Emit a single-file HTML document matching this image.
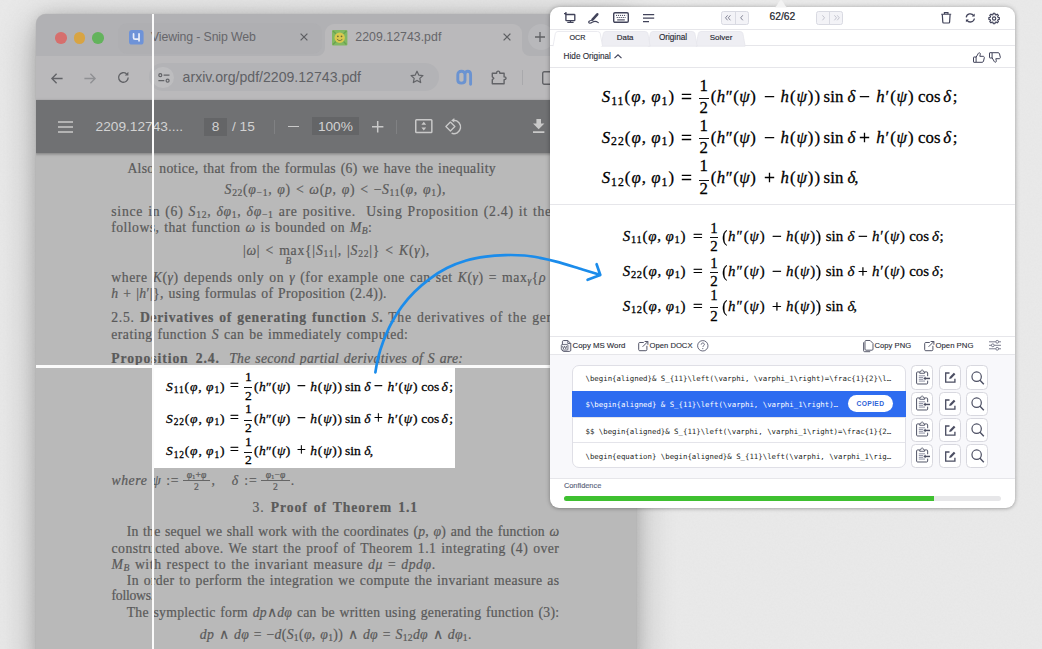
<!DOCTYPE html>
<html lang="en">
<head>
<meta charset="utf-8">
<title>Snip</title>
<style>
*{box-sizing:border-box;margin:0;padding:0}
html,body{width:1042px;height:649px;overflow:hidden}
body{position:relative;background:#e9e9e9;font-family:"Liberation Sans",sans-serif;-webkit-font-smoothing:antialiased}
.abs{position:absolute}
svg{display:block;overflow:visible}
/* ---------- browser window ---------- */
#win{position:absolute;left:35.6px;top:14.3px;width:600.6px;height:660px;border-radius:10px 10px 0 0;background:#b9b9b9;box-shadow:0 0 0 .5px rgba(0,0,0,.06),0 10px 38px rgba(0,0,0,.30),0 0 14px rgba(0,0,0,.10);overflow:hidden}
#tabbar{position:absolute;left:-.6px;top:-.3px;width:602px;height:42px;background:#b1b1b4}
#addr{position:absolute;left:-.6px;top:41.7px;width:602px;height:44px;background:#bab9bb}
#pdfbar{position:absolute;left:-.6px;top:85.7px;width:602px;height:53.3px;background:#707173;box-shadow:0 1px 3px rgba(0,0,0,.35)}
.tl{position:absolute;top:18px;width:11.5px;height:11.5px;border-radius:50%}
.ttext{position:absolute;font-size:12.3px;letter-spacing:-.12px;color:#66666a;white-space:nowrap;line-height:14px}
.ptext{position:absolute;font-size:13.7px;color:#d2d2d2;white-space:nowrap;line-height:16px}
/* ---------- pdf page ---------- */
#page{position:absolute;left:-.6px;top:138.7px;width:602px;height:520px;font-family:"Liberation Serif",serif;color:#5a5a5a;-webkit-text-stroke:.22px #5a5a5a;font-size:13.7px}
.ln{position:absolute;white-space:nowrap;line-height:16px;height:16px;text-align:justify;text-align-last:justify}
.ln.c{text-align:center;text-align-last:center}
.ln i,.eq i{font-style:italic}
sub,sup{font-size:.7em;line-height:0;position:relative;vertical-align:baseline;font-style:normal}
sub{top:.22em}
sup{top:-.42em}
.cal{font-style:italic;font-family:"Liberation Serif",serif}
.sf{position:absolute;height:22px;text-align:center;font-size:9.6px;line-height:9px;white-space:nowrap}
.sf span{display:block}
.sf span:first-child{border-bottom:1px solid #666;height:11.5px;line-height:9.5px}
.sf span:last-child{line-height:11px}
/* ---------- equations ---------- */
.eq{position:absolute;white-space:nowrap;font-family:"Liberation Serif",serif;color:#000;line-height:1;-webkit-text-stroke:.28px #000}
.eq.op{transform:scale(1.16);transform-origin:0 58.75%}
.eq .fr{display:inline-block;vertical-align:middle;text-align:center;position:relative;top:-.12em;margin:0 .04em}
.eq .fr b{display:block;font-weight:normal;line-height:1;padding:0 .06em}
.eq .fr b:first-child{border-bottom:.045em solid currentColor;padding-bottom:.06em}
.eq .fr b:last-child{padding-top:.04em}
.eq .op{margin:0 .26em}
.eq .rel{margin:0 .3em}
.eq .fn{margin:0 .17em 0 .12em}
.bar{position:absolute;height:1px;background:#111}
.eq .bp{display:inline-block;transform:scaleY(1.18);transform-origin:50% 58%}
/* ---------- snip overlay ---------- */
#sel{position:absolute;left:154px;top:367.5px;width:301.4px;height:100.8px;background:#fff;overflow:hidden}
#vline{position:absolute;left:152.2px;top:14.3px;width:2px;height:640px;background:#fbfbfb}
#hline{position:absolute;left:35.6px;top:365px;width:520px;height:3px;background:#fbfbfb}
/* ---------- panel ---------- */
#panel{position:absolute;left:550px;top:7px;width:464.6px;height:500.9px;border-radius:9px;background:#fff;box-shadow:0 0 5px rgba(0,0,0,.24),0 1px 3px rgba(0,0,0,.14);color:#25282f}
#panel .hl{position:absolute;left:0;width:100%;height:1px;background:#e6e6ea}
.ui{position:absolute;white-space:nowrap;color:#2b2d36;font-size:8.6px;line-height:10px;-webkit-text-stroke:.12px #2b2d36}
.tab{position:absolute;top:24.3px;height:14.5px;width:50px;font-size:8.4px;line-height:14px;text-align:center;color:#282a33;-webkit-text-stroke:.15px #282a33}
.row{position:absolute;left:0;width:100%;height:25.6px;font-family:"DejaVu Sans Mono","Liberation Mono",monospace;font-size:7.37px;line-height:27.4px;padding-left:12.9px;color:#1d1f24;white-space:nowrap;letter-spacing:0}
.btn{position:absolute;width:22.2px;height:24.2px;border:1px solid #d8d8df;border-radius:4.5px;background:#fff}
</style>
</head>
<body>
<svg class="abs" style="left:0;top:0" width="1042" height="649"><filter id="noise" x="0" y="0" width="100%" height="100%"><feTurbulence type="fractalNoise" baseFrequency=".55" numOctaves="2" seed="7" result="n"/><feColorMatrix type="matrix" values="0 0 0 0 0.5  0 0 0 0 0.5  0 0 0 0 0.5  .9 0 0 0 -.28"/></filter><rect width="1042" height="649" fill="#e9e9e9"/><rect width="1042" height="649" filter="url(#noise)" opacity=".10"/></svg>
<!-- WINDOW -->
<div id="win">
  <div id="tabbar">
    <div class="tl" style="left:20px;background:#d66f6d"></div>
    <div class="tl" style="left:38.5px;background:#d8a443"></div>
    <div class="tl" style="left:57.3px;background:#63b35c"></div>
    <!-- inactive tab hover shape -->
    <div class="abs" style="left:83px;top:9px;width:204px;height:31px;border-radius:9px;background:#afafb2"></div>
    <!-- tab 1 favicon -->
    <svg class="abs" style="left:94.3px;top:15.8px" width="14.6" height="14.6" viewBox="0 0 16 16"><rect width="16" height="16" rx="3.2" fill="#6e93d8"/><path d="M5 4.3v4.1c0 1 .6 1.6 1.6 1.6H11M11 4.3v7.6" fill="none" stroke="#e9eefa" stroke-width="1.9" stroke-linecap="round" stroke-linejoin="round"/></svg>
    <div class="ttext" style="left:116px;top:15.6px">Viewing - Snip Web</div>
    <svg class="abs" style="left:265.3px;top:19.2px" width="8" height="8" viewBox="0 0 8 8"><path d="M.6.6l6.8 6.8M7.4.6L.6 7.4" stroke="#5f6064" stroke-width="1.25" fill="none"/></svg>
    <!-- active tab -->
    <div class="abs" style="left:289.5px;top:10px;width:197.5px;height:32px;border-radius:9px 9px 0 0;background:#bab9bb"></div>
    <svg class="abs" style="left:281.5px;top:34px" width="8" height="8" viewBox="0 0 8 8"><path d="M8 0v8H0A8 8 0 0 0 8 0z" fill="#bab9bb"/></svg>
    <svg class="abs" style="left:487px;top:34px" width="8" height="8" viewBox="0 0 8 8"><path d="M0 0v8h8A8 8 0 0 1 0 0z" fill="#bab9bb"/></svg>
    <!-- tab 2 favicon -->
    <svg class="abs" style="left:297px;top:15.8px" width="15.4" height="15.4" viewBox="0 0 16 16"><rect width="16" height="16" rx="1" fill="#82b862"/><path d="M1 1l3 3M15 1l-3 3M1 15l3-3M15 15l-3-3" stroke="#6aa34d" stroke-width="1.4"/><circle cx="8" cy="8" r="5.4" fill="#d9c84e"/><circle cx="6.1" cy="6.6" r=".9" fill="#6b6a3a"/><circle cx="9.9" cy="6.6" r=".9" fill="#6b6a3a"/><path d="M5.2 9.3c1.4 2.2 4.2 2.2 5.6 0" fill="none" stroke="#6b6a3a" stroke-width="1"/></svg>
    <div class="ttext" style="left:320.3px;top:15.6px;letter-spacing:.04px">2209.12743.pdf</div>
    <svg class="abs" style="left:468px;top:19.2px" width="8" height="8" viewBox="0 0 8 8"><path d="M.6.6l6.8 6.8M7.4.6L.6 7.4" stroke="#5f6064" stroke-width="1.25" fill="none"/></svg>
    <!-- new tab -->
    <div class="abs" style="left:492.5px;top:10px;width:26px;height:26px;border-radius:13px;background:#b8b8bb"></div>
    <svg class="abs" style="left:500.3px;top:18px" width="10" height="10" viewBox="0 0 10 10"><path d="M5 0v10M0 5h10" stroke="#5f6064" stroke-width="1.3" fill="none"/></svg>
  </div>
  <div id="addr">
    <!-- back -->
    <svg class="abs" style="left:15.5px;top:16.6px" width="12" height="11" viewBox="0 0 12 11"><path d="M5.6.7L.9 5.5l4.7 4.8M1.2 5.5h10.4" fill="none" stroke="#626367" stroke-width="1.35"/></svg>
    <!-- forward -->
    <svg class="abs" style="left:48.6px;top:16.6px" width="12" height="11" viewBox="0 0 12 11"><path d="M6.4.7l4.7 4.8-4.7 4.8M10.8 5.5H.4" fill="none" stroke="#8f9093" stroke-width="1.35"/></svg>
    <!-- reload -->
    <svg class="abs" style="left:82.3px;top:15.4px" width="13" height="13" viewBox="0 0 13 13"><path d="M11.2 6.6A4.8 4.8 0 1 1 9.6 2.9" fill="none" stroke="#626367" stroke-width="1.35"/><path d="M11.4.8v3.6H7.8z" fill="#626367"/></svg>
    <!-- pill -->
    <div class="abs" style="left:113.6px;top:7px;width:290.6px;height:28.4px;border-radius:14.2px;background:#b3b3b6"></div>
    <div class="abs" style="left:117.4px;top:10.6px;width:22px;height:21.4px;border-radius:11px;background:#bdbdbf"></div>
    <svg class="abs" style="left:122.6px;top:17.2px" width="12" height="10" viewBox="0 0 12 10"><circle cx="2.3" cy="2.2" r="1.5" fill="none" stroke="#626367" stroke-width="1.2"/><path d="M5.6 2.2h5.9M.4 7.7h5.9" stroke="#626367" stroke-width="1.2"/><circle cx="9.6" cy="7.7" r="1.5" fill="none" stroke="#626367" stroke-width="1.2"/></svg>
    <div class="abs" style="left:147.6px;top:13.4px;font-size:14.1px;line-height:16px;color:#606165;white-space:nowrap">arxiv.org/pdf/2209.12743.pdf</div>
    <!-- star -->
    <svg class="abs" style="left:375px;top:14.4px" width="14" height="14" viewBox="0 0 14 14"><path d="M7 1.2l1.75 3.9 4.2.45-3.15 2.85.9 4.15L7 10.4l-3.7 2.15.9-4.15L1.05 5.55l4.2-.45z" fill="none" stroke="#626367" stroke-width="1.2" stroke-linejoin="round"/></svg>
    <!-- mathpix ext -->
    <svg class="abs" style="left:420.600px;top:13.900px" width="17" height="16" viewBox="0 0 17 16"><path d="M9 4.400V10.400M9 4.600C9 2.300 7.800 1.300 5.400 1.300S1.800 2.500 1.800 4.700V9.900C1.800 12 3 13.100 5.400 13.100S9 12 9 10.200M9 4.600C9 2.300 10 1.300 11.800 1.300S14.600 2.500 14.600 4.700V14.300" fill="none" stroke="#6b93d1" stroke-width="2.900" stroke-linecap="round" stroke-linejoin="round"/></svg>
    <!-- puzzle -->
    <svg class="abs" style="left:455.600px;top:13px" width="16" height="16" viewBox="0 0 16 16"><path d="M1.300 4.200h4.300c0-1.400.6-2.100 1.600-2.100s1.600.7 1.600 2.100h4.300v3.700c1.300 0 2 .5 2 1.400s-.7 1.400-2 1.400v4H1.300v-3.900l1.500-1.500-1.500-1.500z" fill="none" stroke="#626367" stroke-width="1.400" stroke-linejoin="round"/></svg>
    <div class="abs" style="left:487px;top:14px;width:1px;height:15px;background:#a9a9ac"></div>
    <!-- side panel icon -->
    <svg class="abs" style="left:506.6px;top:14.600px" width="16" height="14" viewBox="0 0 16 14"><rect x=".7" y=".7" width="14.6" height="12.6" rx="1.5" fill="none" stroke="#626367" stroke-width="1.4"/></svg>
  </div>
  <div id="pdfbar">
    <svg class="abs" style="left:23px;top:21px" width="15" height="12" viewBox="0 0 15 12"><path d="M0 1h15M0 6h15M0 11h15" stroke="#c9c9c9" stroke-width="1.5"/></svg>
    <div class="ptext" style="left:60.6px;top:19.2px">2209.12743....</div>
    <div class="abs" style="left:168.8px;top:18px;width:23.6px;height:17.6px;background:#646567"></div>
    <div class="ptext" style="left:168.8px;top:19.2px;width:23.6px;text-align:center">8</div>
    <div class="ptext" style="left:197px;top:19.2px">/ 15</div>
    <div class="abs" style="left:239px;top:20px;width:1px;height:14px;background:#808183"></div>
    <div class="abs" style="left:253px;top:25.9px;width:11.4px;height:1.5px;background:#c9c9c9"></div>
    <div class="abs" style="left:276.7px;top:17px;width:47.4px;height:18.400px;background:#646567"></div>
    <div class="ptext" style="left:276.7px;top:19.2px;width:47.4px;text-align:center">100%</div>
    <svg class="abs" style="left:337px;top:20.9px" width="11.4" height="11.4" viewBox="0 0 11.4 11.4"><path d="M5.700 0v11.4M0 5.700h11.4" stroke="#c9c9c9" stroke-width="1.5"/></svg>
    <div class="abs" style="left:361.4px;top:20px;width:1px;height:14px;background:#808183"></div>
    <!-- fit to page -->
    <svg class="abs" style="left:379.600px;top:19.200px" width="17.6" height="14.2" viewBox="0 0 17.6 14.2"><rect x=".75" y=".75" width="16.100" height="12.700" rx=".8" fill="none" stroke="#c9c9c9" stroke-width="1.500"/><path d="M8.800 2.700l2.400 3h-4.800zM8.800 11.500l2.400-3h-4.800z" fill="#c9c9c9"/></svg>
    <!-- rotate -->
    <svg class="abs" style="left:410px;top:19.300px" width="17.4" height="15.4" viewBox="0 0 17.4 15.4"><path d="M5.400 3.100l4.500 4.500-4.500 4.500L.900 7.600z" fill="none" stroke="#c9c9c9" stroke-width="1.350" stroke-linejoin="round"/><path d="M8.900 1.300A6.700 6.700 0 1 1 6.600 14.300" fill="none" stroke="#c9c9c9" stroke-width="1.450"/><path d="M9.300-.9L6.200 1.400l3.100 2.200z" fill="#c9c9c9"/></svg>
    <!-- download -->
    <svg class="abs" style="left:498.300px;top:19px" width="11.400" height="14" viewBox="0 0 11.400 14"><path d="M3.400 0h4.600v4.600h3.400L5.700 10.200 0 4.600h3.400zM0 12.200h11.400v1.700H0z" fill="#c9c9c9"/></svg>
  </div>
  <div id="page">
    <!--PAGE-->
    <div class="ln" style="left:92.4px;top:7.7px;width:368.6px;letter-spacing:0.32px">Also notice, that from the formulas (6) we have the inequality</div>
    <div class="ln" style="left:189.6px;top:29.3px;width:221.4px;letter-spacing:0.68px"><i>S</i><sub>22</sub>(<i>φ</i><sub>−1</sub>, <i>φ</i>) &lt; <i>ω</i>(<i>p</i>, <i>φ</i>) &lt; −<i>S</i><sub>11</sub>(<i>φ</i>, <i>φ</i><sub>1</sub>),</div>
    <div class="ln" style="left:76.3px;top:51.1px;width:448.1px;letter-spacing:0.73px">since in (6) <i>S</i><sub>12</sub>, <i>δφ</i><sub>1</sub>, <i>δφ</i><sub>−1</sub> are positive. &nbsp;Using Proposition (2.4) it then</div>
    <div class="ln" style="left:76.3px;top:67.0px;width:261.1px;letter-spacing:0.45px">follows, that function <i>ω</i> is bounded on <i>M</i><sub><i>B</i></sub>:</div>
    <div class="ln" style="left:207.9px;top:90.1px;width:187.0px;letter-spacing:0.76px">|<i>ω</i>| &lt; max{|<i>S</i><sub>11</sub>|, |<i>S</i><sub>22</sub>|} &lt; <i>K</i>(<i>γ</i>),</div>
    <div class="ln" style="left:250.5px;top:100.2px;width:7.0px;font-size:9.4px"><i>B</i></div>
    <div class="ln" style="left:76.3px;top:116.9px;width:448.1px;letter-spacing:0.58px">where <i>K</i>(<i>γ</i>) depends only on <i>γ</i> (for example one can set <i>K</i>(<i>γ</i>) = max<sub><i>γ</i></sub>{<i>ρ</i> +</div>
    <div class="ln" style="left:76.3px;top:133.1px;width:275.6px;letter-spacing:0.37px"><i>h</i> + |<i>h</i>′|}, using formulas of Proposition (2.4)).</div>
    <div class="ln" style="left:76.3px;top:157.3px;width:448.1px;letter-spacing:0.73px">2.5. <b>Derivatives of generating function</b> <i>S</i><b>.</b> The derivatives of the gen-</div>
    <div class="ln" style="left:76.3px;top:173.9px;width:297.1px;letter-spacing:0.47px">erating function <i>S</i> can be immediately computed:</div>
    <div class="ln" style="left:76.3px;top:197.6px;width:108.5px;letter-spacing:0.90px"><b>Proposition 2.4.</b></div>
    <div class="ln" style="left:194.2px;top:197.6px;width:234.0px;letter-spacing:0.30px"><i>The second partial derivatives of S are:</i></div>
    <div class="ln" style="left:76.5px;top:319.6px;width:67.5px;letter-spacing:0.57px"><i>where ψ</i> :=</div>
    <div class="ln" style="left:196.8px;top:319.6px;width:25.7px;letter-spacing:0.84px"><i>δ</i> :=</div>
    <div class="ln" style="left:217.5px;top:347.5px;width:165.5px;letter-spacing:0.90px">3. <b>Proof of Theorem 1.1</b></div>
    <div class="ln" style="left:91.7px;top:371.5px;width:432.7px;letter-spacing:0.20px">In the sequel we shall work with the coordinates (<i>p</i>, <i>φ</i>) and the function <i>ω</i></div>
    <div class="ln" style="left:76.5px;top:387.8px;width:447.9px;letter-spacing:0.48px">constructed above. We start the proof of Theorem 1.1 integrating (4) over</div>
    <div class="ln" style="left:76.5px;top:403.9px;width:324.2px;letter-spacing:0.58px"><i>M</i><sub><i>B</i></sub> with respect to the invariant measure <i>dμ</i> = <i>dpdφ</i>.</div>
    <div class="ln" style="left:91.7px;top:419.9px;width:432.7px;letter-spacing:0.39px">In order to perform the integration we compute the invariant measure as</div>
    <div class="ln" style="left:76.5px;top:435.5px;width:42.4px;letter-spacing:-0.26px">follows.</div>
    <div class="ln" style="left:91.7px;top:452.3px;width:432.7px;letter-spacing:0.28px">The symplectic form <i>dp</i>∧<i>dφ</i> can be written using generating function (3):</div>
    <div class="ln" style="left:164.8px;top:473.6px;width:272.0px;letter-spacing:0.33px"><i>dp</i> ∧ <i>dφ</i> = −<i>d</i>(<i>S</i><sub>1</sub>(<i>φ</i>, <i>φ</i><sub>1</sub>)) ∧ <i>dφ</i> = <i>S</i><sub>12</sub><i>dφ</i> ∧ <i>dφ</i><sub>1</sub>.</div>
    <div class="sf" style="left:147.7px;top:316.6px;width:27.6px"><span><i>φ</i><sub>1</sub>+<i>φ</i></span><span>2</span></div><div class="ln" style="left:176.6px;top:319.6px;width:4px;text-align-last:left">,</div>
    <div class="sf" style="left:226.3px;top:316.6px;width:28.4px"><span><i>φ</i><sub>1</sub>−<i>φ</i></span><span>2</span></div><div class="ln" style="left:255.8px;top:319.6px;width:4px;text-align-last:left">.</div>
    <!--/PAGE-->
  </div>
</div>
<!-- OVERLAY -->
<div id="sel">
  <!--SEL-->
    <div class="eq" style="left:12.10px;top:12.39px;font-size:13.50px;letter-spacing:0.86px"><i>S</i><sub>11</sub>(<i>φ</i>,&#8201;<i>φ</i><sub>1</sub>)</div>
    <div class="eq op" style="left:76.03px;top:12.39px;font-size:13.50px">=</div>
    <div class="eq" style="left:90.95px;top:2.41px;font-size:13.50px">1</div>
    <div class="eq" style="left:90.95px;top:21.38px;font-size:13.50px">2</div>
    <div class="bar" style="left:90.39px;top:19.93px;width:7.86px"></div>
    <div class="eq" style="left:99.97px;top:12.39px;font-size:13.50px;letter-spacing:0.42px">(<i>h</i>″(<i>ψ</i>)</div>
    <div class="eq op" style="left:143.18px;top:12.39px;font-size:13.50px">−</div>
    <div class="eq" style="left:156.32px;top:12.39px;font-size:13.50px;letter-spacing:0.78px"><i>h</i>(<i>ψ</i>))</div>
    <div class="eq" style="left:190.98px;top:12.39px;font-size:13.50px;letter-spacing:0.06px">sin</div>
    <div class="eq" style="left:210.33px;top:12.39px;font-size:13.50px"><i>δ</i></div>
    <div class="eq op" style="left:219.76px;top:12.39px;font-size:13.50px">−</div>
    <div class="eq" style="left:233.46px;top:12.39px;font-size:13.50px;letter-spacing:0.72px"><i>h</i>′(<i>ψ</i>)</div>
    <div class="eq" style="left:267.16px;top:12.39px;font-size:13.50px;letter-spacing:0.03px">cos</div>
    <div class="eq" style="left:287.39px;top:12.39px;font-size:13.50px;letter-spacing:1.48px"><i>δ</i>;</div>
    <div class="eq" style="left:12.10px;top:44.79px;font-size:13.50px;letter-spacing:0.82px"><i>S</i><sub>22</sub>(<i>φ</i>,&#8201;<i>φ</i><sub>1</sub>)</div>
    <div class="eq op" style="left:76.03px;top:44.79px;font-size:13.50px">=</div>
    <div class="eq" style="left:90.95px;top:34.81px;font-size:13.50px">1</div>
    <div class="eq" style="left:90.95px;top:53.78px;font-size:13.50px">2</div>
    <div class="bar" style="left:90.39px;top:52.33px;width:7.86px"></div>
    <div class="eq" style="left:99.97px;top:44.79px;font-size:13.50px;letter-spacing:0.42px">(<i>h</i>″(<i>ψ</i>)</div>
    <div class="eq op" style="left:143.18px;top:44.79px;font-size:13.50px">−</div>
    <div class="eq" style="left:156.32px;top:44.79px;font-size:13.50px;letter-spacing:0.78px"><i>h</i>(<i>ψ</i>))</div>
    <div class="eq" style="left:190.98px;top:44.79px;font-size:13.50px;letter-spacing:0.06px">sin</div>
    <div class="eq" style="left:210.33px;top:44.79px;font-size:13.50px"><i>δ</i></div>
    <div class="eq op" style="left:219.76px;top:44.79px;font-size:13.50px">+</div>
    <div class="eq" style="left:233.46px;top:44.79px;font-size:13.50px;letter-spacing:0.72px"><i>h</i>′(<i>ψ</i>)</div>
    <div class="eq" style="left:267.16px;top:44.79px;font-size:13.50px;letter-spacing:0.03px">cos</div>
    <div class="eq" style="left:287.39px;top:44.79px;font-size:13.50px;letter-spacing:1.48px"><i>δ</i>;</div>
    <div class="eq" style="left:12.10px;top:76.99px;font-size:13.50px;letter-spacing:0.82px"><i>S</i><sub>12</sub>(<i>φ</i>,&#8201;<i>φ</i><sub>1</sub>)</div>
    <div class="eq op" style="left:76.03px;top:76.99px;font-size:13.50px">=</div>
    <div class="eq" style="left:90.95px;top:67.56px;font-size:13.50px">1</div>
    <div class="eq" style="left:90.95px;top:85.98px;font-size:13.50px">2</div>
    <div class="bar" style="left:90.39px;top:84.53px;width:7.86px"></div>
    <div class="eq" style="left:99.97px;top:76.99px;font-size:13.50px;letter-spacing:0.42px">(<i>h</i>″(<i>ψ</i>)</div>
    <div class="eq op" style="left:143.18px;top:76.99px;font-size:13.50px">+</div>
    <div class="eq" style="left:156.32px;top:76.99px;font-size:13.50px;letter-spacing:0.78px"><i>h</i>(<i>ψ</i>))</div>
    <div class="eq" style="left:190.98px;top:76.99px;font-size:13.50px;letter-spacing:0.06px">sin</div>
    <div class="eq" style="left:210.33px;top:76.99px;font-size:13.50px;letter-spacing:-0.88px"><i>δ</i>,</div>
    <!--/SEL-->
</div>
<div id="vline"></div>
<div id="hline"></div>
<!-- PANEL -->
<div id="panel">
  <!--PANEL-->
    <svg class="abs" style="left:224.2px;top:-7px" width="14" height="7.5" viewBox="0 0 14 7.5"><path d="M0 7.500C3 7.500 5 0 7 0s4 7.500 7 7.500z" fill="#f3f3f3"/></svg>
  <svg class="abs" style="left:14px;top:5.300px" width="11.5" height="11" viewBox="0 0 11.5 11"><path d="M1.900 0v3M0 1.650h2.600" stroke="#41435a" stroke-width="1.250" fill="none"/><rect x="1.900" y="2.500" width="8.900" height="6.100" rx=".5" fill="none" stroke="#41435a" stroke-width="1.35"/><path d="M6.450 8.500v1.800M3.300 10.300h6.300" stroke="#41435a" stroke-width="1.25" fill="none"/></svg>
  <svg class="abs" style="left:38.200px;top:5.600px" width="11.5" height="11" viewBox="0 0 11.5 11"><path d="M9.300 1.300L4.500 6.600" stroke="#41435a" stroke-width="2.500" stroke-linecap="round" fill="none"/><path d="M3.800 7.300C1.500 7.600.2 8.800.8 9.700c.7 1 2.600.2 3.900-.6 1.400-.9 3.300-1.100 5.600.5" stroke="#41435a" stroke-width="1.150" fill="none" stroke-linecap="round"/></svg>
  <svg class="abs" style="left:63.200px;top:5.300px" width="16" height="11" viewBox="0 0 16 11"><rect x=".7" y=".7" width="14.600" height="9.600" rx="1.300" fill="none" stroke="#41435a" stroke-width="1.400"/><path d="M3 3.400h10.200M3.700 5.500h8.800" stroke="#41435a" stroke-width="1" stroke-dasharray="1.100 .9" fill="none"/><path d="M4.200 7.900h7.600" stroke="#41435a" stroke-width="1.100" fill="none"/></svg>
  <svg class="abs" style="left:93px;top:6.800px" width="11.400" height="8.400" viewBox="0 0 11.400 8.400"><path d="M0 .7h11.200M0 4.100h11.200M0 7.600h6" stroke="#41435a" stroke-width="1.250" fill="none"/></svg>
  <div class="abs" style="left:171.2px;top:4.200px;width:27.400px;height:13.600px;border:1px solid #d9dae2;border-radius:2.500px;background:#f3f3f7"></div><div class="abs" style="left:184.6px;top:4.700px;width:1px;height:12.600px;background:#d9dae2"></div>
  <svg class="abs" style="left:175px;top:8.300px" width="20" height="5.600" viewBox="0 0 20 5.600"><path d="M2.600.3L.5 2.800l2.100 2.500M5.400.3L3.300 2.800l2.100 2.500M17.800.3l-2.100 2.500 2.100 2.500" stroke="#6d6f82" stroke-width=".85" fill="none"/></svg>
  <div class="abs" style="left:266.0px;top:4.200px;width:27.400px;height:13.600px;border:1px solid #d9dae2;border-radius:2.500px;background:#f3f3f7"></div><div class="abs" style="left:279.4px;top:4.700px;width:1px;height:12.600px;background:#d9dae2"></div>
  <svg class="abs" style="left:270.200px;top:8.300px" width="20" height="5.600" viewBox="0 0 20 5.600"><path d="M2.400.3l2.100 2.500-2.100 2.500M14.400.3l2.100 2.500-2.100 2.500M17.200.3l2.100 2.500-2.100 2.500" stroke="#b9bac6" stroke-width=".85" fill="none"/></svg>
  <div class="ui" style="left:212.400px;top:3.600px;width:40px;text-align:center;font-size:10.300px;line-height:12px;color:#22242c;-webkit-text-stroke:.2px #22242c">62/62</div>
  <svg class="abs" style="left:391.200px;top:4.900px" width="10.400" height="11.600" viewBox="0 0 10.400 11.600"><path d="M.2 2.300h10M3.400 2.100V.600h3.600v1.500" stroke="#41435a" stroke-width="1.100" fill="none"/><path d="M1.300 2.400l.5 7.700c0 .6.400.9.900.9h5c.5 0 .9-.3.900-.9l.5-7.700" stroke="#41435a" stroke-width="1.200" fill="none"/></svg>
  <svg class="abs" style="left:415px;top:6.300px" width="10.600" height="9.800" viewBox="0 0 10.600 9.800"><path d="M1.200 4.300A4.100 4.100 0 0 1 8.700 2.700M9.400 5.500A4.100 4.100 0 0 1 1.900 7.100" stroke="#41435a" stroke-width="1.250" fill="none"/><path d="M9.700.5v2.900H6.800zM.9 9.300V6.400h2.900z" fill="#41435a"/></svg>
  <svg class="abs" style="left:438.200px;top:4.900px" width="12.200" height="12.200" viewBox="0 0 24 24"><path d="M10.300 2.500h3.400l.5 2.600 1.700.7 2.200-1.500 2.400 2.400-1.500 2.200.7 1.700 2.600.5v3.400l-2.600.5-.7 1.700 1.500 2.200-2.400 2.400-2.200-1.500-1.700.7-.5 2.600h-3.400l-.5-2.600-1.700-.7-2.200 1.500-2.400-2.400 1.500-2.200-.7-1.700-2.600-.5v-3.400l2.600-.5.7-1.700-1.500-2.200 2.400-2.400 2.200 1.500 1.700-.7z" fill="none" stroke="#41435a" stroke-width="2.300" stroke-linejoin="round"/><circle cx="12" cy="12.800" r="3.300" fill="none" stroke="#41435a" stroke-width="2.200"/></svg>
  <div class="hl" style="top:22.200px"></div>
  <div class="hl" style="top:38.400px"></div>
  <svg class="abs" style="left:146.4px;top:23.700px" width="49.2" height="15.2" viewBox="0 0 49.2 15.2"><path d="M0 15.2L2.300 2.600Q2.800 .5 5 .5H44.2Q46.4 .5 46.9 2.600L49.2 15.2z" fill="#eeeef3" stroke="#e6e6ec" stroke-width=".8"/></svg><div class="tab" style="left:146.4px;width:49.2px;font-size:8.0px">Solver</div>
  <svg class="abs" style="left:98.4px;top:23.700px" width="49.2" height="15.2" viewBox="0 0 49.2 15.2"><path d="M0 15.2L2.300 2.600Q2.800 .5 5 .5H44.2Q46.4 .5 46.9 2.600L49.2 15.2z" fill="#eeeef3" stroke="#e6e6ec" stroke-width=".8"/></svg><div class="tab" style="left:98.4px;width:49.2px;font-size:8.2px">Original</div>
  <svg class="abs" style="left:50.6px;top:23.700px" width="49.2" height="15.2" viewBox="0 0 49.2 15.2"><path d="M0 15.2L2.300 2.600Q2.800 .5 5 .5H44.2Q46.4 .5 46.9 2.600L49.2 15.2z" fill="#eeeef3" stroke="#e6e6ec" stroke-width=".8"/></svg><div class="tab" style="left:50.6px;width:49.2px;font-size:7.9px">Data</div>
  <svg class="abs" style="left:2.6px;top:23.700px" width="49.6" height="15.2" viewBox="0 0 49.6 15.2"><path d="M0 15.2L2.300 2.600Q2.800 .5 5 .5H44.6Q46.8 .5 47.3 2.600L49.6 15.2" fill="#fff" stroke="#e6e6ec" stroke-width=".8"/></svg><div class="tab" style="left:2.6px;width:49.6px;font-size:7.2px">OCR</div>
  <div class="ui" style="left:13.600px;top:44.500px;font-size:8.200px">Hide Original</div>
  <svg class="abs" style="left:63.500px;top:47.300px" width="8" height="4.600" viewBox="0 0 8 4.600"><path d="M.5 4.200L4 .8l3.500 3.400" stroke="#41435a" stroke-width="1.150" fill="none"/></svg>
  <svg class="abs" style="left:423px;top:45.200px" width="12" height="11" viewBox="0 0 12 11"><path d="M3.100 10.300H.900a.4.400 0 0 1-.4-.4V5.400c0-.2.200-.4.400-.4h2.200zM3.100 5.200l2.300-3.900c.2-.4.600-.6 1-.5.700.100 1.100.800.900 1.500L6.800 4.300h3.300c.8 0 1.400.700 1.200 1.500l-.8 3.400c-.2.700-.7 1.100-1.400 1.100H3.100" stroke="#41435a" stroke-width="1" fill="none" stroke-linejoin="round"/></svg>
  <svg class="abs" style="left:439.400px;top:45.400px;transform:scaleY(-1)" width="12" height="11" viewBox="0 0 12 11"><path d="M3.100 10.300H.900a.4.400 0 0 1-.4-.4V5.400c0-.2.200-.4.400-.4h2.200zM3.100 5.200l2.300-3.900c.2-.4.600-.6 1-.5.700.100 1.100.800.900 1.500L6.800 4.300h3.300c.8 0 1.400.700 1.200 1.500l-.8 3.400c-.2.700-.7 1.100-1.400 1.100H3.100" stroke="#41435a" stroke-width="1" fill="none" stroke-linejoin="round"/></svg>
  <div class="hl" style="top:60.200px"></div>
  <!--B1-->
    <div class="eq" style="left:51.70px;top:82.33px;font-size:16.80px;letter-spacing:1.04px"><i>S</i><sub>11</sub>(<i>φ</i>,&#8201;<i>φ</i><sub>1</sub>)</div>
    <div class="eq op" style="left:131.00px;top:82.33px;font-size:16.80px">=</div>
    <div class="eq" style="left:149.50px;top:70.59px;font-size:16.80px">1</div>
    <div class="eq" style="left:149.50px;top:92.51px;font-size:16.80px">2</div>
    <div class="bar" style="left:148.81px;top:90.83px;width:9.78px"></div>
    <div class="eq" style="left:160.70px;top:82.33px;font-size:16.80px;letter-spacing:0.50px">(<i>h</i>″(<i>ψ</i>)</div>
    <div class="eq op" style="left:214.30px;top:82.33px;font-size:16.80px">−</div>
    <div class="eq" style="left:230.60px;top:82.33px;font-size:16.80px;letter-spacing:0.95px"><i>h</i>(<i>ψ</i>))</div>
    <div class="eq" style="left:273.60px;top:82.33px;font-size:16.80px;letter-spacing:0.05px">sin</div>
    <div class="eq" style="left:297.60px;top:82.33px;font-size:16.80px"><i>δ</i></div>
    <div class="eq op" style="left:309.30px;top:82.33px;font-size:16.80px">−</div>
    <div class="eq" style="left:326.30px;top:82.33px;font-size:16.80px;letter-spacing:0.88px"><i>h</i>′(<i>ψ</i>)</div>
    <div class="eq" style="left:368.10px;top:82.33px;font-size:16.80px;letter-spacing:0.01px">cos</div>
    <div class="eq" style="left:393.20px;top:82.33px;font-size:16.80px;letter-spacing:1.82px"><i>δ</i>;</div>
    <div class="eq" style="left:51.70px;top:122.73px;font-size:16.80px;letter-spacing:0.99px"><i>S</i><sub>22</sub>(<i>φ</i>,&#8201;<i>φ</i><sub>1</sub>)</div>
    <div class="eq op" style="left:131.00px;top:122.73px;font-size:16.80px">=</div>
    <div class="eq" style="left:149.50px;top:110.99px;font-size:16.80px">1</div>
    <div class="eq" style="left:149.50px;top:132.91px;font-size:16.80px">2</div>
    <div class="bar" style="left:148.81px;top:131.23px;width:9.78px"></div>
    <div class="eq" style="left:160.70px;top:122.73px;font-size:16.80px;letter-spacing:0.50px">(<i>h</i>″(<i>ψ</i>)</div>
    <div class="eq op" style="left:214.30px;top:122.73px;font-size:16.80px">−</div>
    <div class="eq" style="left:230.60px;top:122.73px;font-size:16.80px;letter-spacing:0.95px"><i>h</i>(<i>ψ</i>))</div>
    <div class="eq" style="left:273.60px;top:122.73px;font-size:16.80px;letter-spacing:0.05px">sin</div>
    <div class="eq" style="left:297.60px;top:122.73px;font-size:16.80px"><i>δ</i></div>
    <div class="eq op" style="left:309.30px;top:122.73px;font-size:16.80px">+</div>
    <div class="eq" style="left:326.30px;top:122.73px;font-size:16.80px;letter-spacing:0.88px"><i>h</i>′(<i>ψ</i>)</div>
    <div class="eq" style="left:368.10px;top:122.73px;font-size:16.80px;letter-spacing:0.01px">cos</div>
    <div class="eq" style="left:393.20px;top:122.73px;font-size:16.80px;letter-spacing:1.82px"><i>δ</i>;</div>
    <div class="eq" style="left:51.70px;top:163.03px;font-size:16.80px;letter-spacing:0.99px"><i>S</i><sub>12</sub>(<i>φ</i>,&#8201;<i>φ</i><sub>1</sub>)</div>
    <div class="eq op" style="left:131.00px;top:163.03px;font-size:16.80px">=</div>
    <div class="eq" style="left:149.50px;top:151.29px;font-size:16.80px">1</div>
    <div class="eq" style="left:149.50px;top:174.21px;font-size:16.80px">2</div>
    <div class="bar" style="left:148.81px;top:172.53px;width:9.78px"></div>
    <div class="eq" style="left:160.70px;top:163.03px;font-size:16.80px;letter-spacing:0.50px">(<i>h</i>″(<i>ψ</i>)</div>
    <div class="eq op" style="left:214.30px;top:163.03px;font-size:16.80px">+</div>
    <div class="eq" style="left:230.60px;top:163.03px;font-size:16.80px;letter-spacing:0.95px"><i>h</i>(<i>ψ</i>))</div>
    <div class="eq" style="left:273.60px;top:163.03px;font-size:16.80px;letter-spacing:0.05px">sin</div>
    <div class="eq" style="left:297.60px;top:163.03px;font-size:16.80px;letter-spacing:-1.12px"><i>δ</i>,</div>
    <!--/B1-->
  <div class="hl" style="top:197.400px"></div>
  <!--B2-->
    <div class="eq" style="left:72.75px;top:221.62px;font-size:14.90px;letter-spacing:0.77px"><i>S</i><sub>11</sub>(<i>φ</i>,&#8201;<i>φ</i><sub>1</sub>)</div>
    <div class="eq op" style="left:143.00px;top:221.62px;font-size:14.90px">=</div>
    <div class="eq" style="left:160.27px;top:213.68px;font-size:14.90px">1</div>
    <div class="eq" style="left:160.27px;top:231.50px;font-size:14.90px">2</div>
    <div class="bar" style="left:159.68px;top:230.00px;width:8.64px"></div>
    <div class="eq" style="left:172.20px;top:221.62px;font-size:14.90px;letter-spacing:0.94px"><span class="bp">(</span><i>h</i>″(<i>ψ</i>)</div>
    <div class="eq op" style="left:221.70px;top:221.62px;font-size:14.90px">−</div>
    <div class="eq" style="left:236.00px;top:221.62px;font-size:14.90px;letter-spacing:0.85px"><i>h</i>(<i>ψ</i>)<span class="bp">)</span></div>
    <div class="eq" style="left:275.70px;top:221.62px;font-size:14.90px;letter-spacing:0.10px">sin</div>
    <div class="eq" style="left:297.60px;top:221.62px;font-size:14.90px"><i>δ</i></div>
    <div class="eq op" style="left:308.20px;top:221.62px;font-size:14.90px">−</div>
    <div class="eq" style="left:322.00px;top:221.62px;font-size:14.90px;letter-spacing:0.78px"><i>h</i>′(<i>ψ</i>)</div>
    <div class="eq" style="left:359.20px;top:221.62px;font-size:14.90px;letter-spacing:-0.03px">cos</div>
    <div class="eq" style="left:382.00px;top:221.62px;font-size:14.90px;letter-spacing:0.54px"><i>δ</i>;</div>
    <div class="eq" style="left:72.75px;top:256.62px;font-size:14.90px;letter-spacing:0.73px"><i>S</i><sub>22</sub>(<i>φ</i>,&#8201;<i>φ</i><sub>1</sub>)</div>
    <div class="eq op" style="left:143.00px;top:256.62px;font-size:14.90px">=</div>
    <div class="eq" style="left:160.27px;top:248.68px;font-size:14.90px">1</div>
    <div class="eq" style="left:160.27px;top:266.50px;font-size:14.90px">2</div>
    <div class="bar" style="left:159.68px;top:265.00px;width:8.64px"></div>
    <div class="eq" style="left:172.20px;top:256.62px;font-size:14.90px;letter-spacing:0.94px"><span class="bp">(</span><i>h</i>″(<i>ψ</i>)</div>
    <div class="eq op" style="left:221.70px;top:256.62px;font-size:14.90px">−</div>
    <div class="eq" style="left:236.00px;top:256.62px;font-size:14.90px;letter-spacing:0.85px"><i>h</i>(<i>ψ</i>)<span class="bp">)</span></div>
    <div class="eq" style="left:275.70px;top:256.62px;font-size:14.90px;letter-spacing:0.10px">sin</div>
    <div class="eq" style="left:297.60px;top:256.62px;font-size:14.90px"><i>δ</i></div>
    <div class="eq op" style="left:308.20px;top:256.62px;font-size:14.90px">+</div>
    <div class="eq" style="left:322.00px;top:256.62px;font-size:14.90px;letter-spacing:0.78px"><i>h</i>′(<i>ψ</i>)</div>
    <div class="eq" style="left:359.20px;top:256.62px;font-size:14.90px;letter-spacing:-0.03px">cos</div>
    <div class="eq" style="left:382.00px;top:256.62px;font-size:14.90px;letter-spacing:0.54px"><i>δ</i>;</div>
    <div class="eq" style="left:72.75px;top:291.72px;font-size:14.90px;letter-spacing:0.73px"><i>S</i><sub>12</sub>(<i>φ</i>,&#8201;<i>φ</i><sub>1</sub>)</div>
    <div class="eq op" style="left:143.00px;top:291.72px;font-size:14.90px">=</div>
    <div class="eq" style="left:160.27px;top:281.35px;font-size:14.90px">1</div>
    <div class="eq" style="left:160.27px;top:301.60px;font-size:14.90px">2</div>
    <div class="bar" style="left:159.68px;top:300.10px;width:8.64px"></div>
    <div class="eq" style="left:172.20px;top:291.72px;font-size:14.90px;letter-spacing:0.94px"><span class="bp">(</span><i>h</i>″(<i>ψ</i>)</div>
    <div class="eq op" style="left:221.70px;top:291.72px;font-size:14.90px">+</div>
    <div class="eq" style="left:236.00px;top:291.72px;font-size:14.90px;letter-spacing:0.85px"><i>h</i>(<i>ψ</i>)<span class="bp">)</span></div>
    <div class="eq" style="left:275.70px;top:291.72px;font-size:14.90px;letter-spacing:0.10px">sin</div>
    <div class="eq" style="left:297.60px;top:291.72px;font-size:14.90px;letter-spacing:-1.17px"><i>δ</i>,</div>
    <!--/B2-->
  <div class="hl" style="top:329.200px"></div>
  <svg class="abs" style="left:10.800px;top:333px" width="10.400" height="12" viewBox="0 0 10.400 12"><path d="M2.600.5h4.200l3 3v6.700c0 .7-.5 1.200-1.200 1.200H2.600c-.7 0-1.200-.5-1.200-1.200V1.700C1.400 1 1.900.5 2.600.5z" fill="#f1f1f6" stroke="#4a4c60" stroke-width=".9"/><path d="M6.800.5v3h3" fill="none" stroke="#4a4c60" stroke-width=".8"/><rect x=".3" y="4.600" width="6.600" height="5.400" rx=".8" fill="#fff" stroke="#4a4c60" stroke-width=".8"/><path d="M1.500 5.900l.9 2.900 1.200-2.700 1.200 2.700.9-2.900" fill="none" stroke="#4a4c60" stroke-width=".75"/></svg>
  <div class="ui" style="left:22.600px;top:333.600px;font-size:7.800px">Copy MS Word</div>
  <svg class="abs" style="left:88.0px;top:333.700px" width="10.400" height="10.400" viewBox="0 0 10.400 10.400"><path d="M5.800 1.500H1.700c-.6 0-1 .4-1 1v6.200c0 .6.400 1 1 1h6.200c.6 0 1-.4 1-1V4.800" fill="none" stroke="#4a4c60" stroke-width=".95"/><path d="M4.600 5.800L9.800.6M6.600.5h3.300v3.300" fill="none" stroke="#4a4c60" stroke-width=".95"/></svg>
  <div class="ui" style="left:99.600px;top:333.600px;font-size:7.650px">Open DOCX</div>
  <svg class="abs" style="left:147.300px;top:332.900px" width="11.600" height="11.600" viewBox="0 0 11.600 11.600"><circle cx="5.800" cy="5.800" r="5.200" fill="none" stroke="#5f6176" stroke-width=".95"/><path d="M4.200 4.600c0-1 .7-1.600 1.600-1.600s1.600.6 1.600 1.500c0 1.200-1.600 1.300-1.600 2.500" fill="none" stroke="#5f6176" stroke-width=".95"/><circle cx="5.800" cy="8.600" r=".6" fill="#5f6176"/></svg>
  <svg class="abs" style="left:311.600px;top:332.800px" width="11.600" height="12.400" viewBox="0 0 11.600 12.400"><path d="M1.600 2.300v8.400c0 .6.400 1 1 1h5.600" fill="none" stroke="#4a4c60" stroke-width=".9"/><path d="M4 .5h4.100l2.900 2.900v5.800c0 .6-.4 1-1 1H4c-.6 0-1-.4-1-1V1.500c0-.6.400-1 1-1z" fill="#fff" stroke="#4a4c60" stroke-width=".9"/></svg>
  <div class="ui" style="left:324.600px;top:333.600px;font-size:7.650px">Copy PNG</div>
  <svg class="abs" style="left:374.0px;top:333.700px" width="10.400" height="10.400" viewBox="0 0 10.400 10.400"><path d="M5.800 1.500H1.700c-.6 0-1 .4-1 1v6.200c0 .6.400 1 1 1h6.200c.6 0 1-.4 1-1V4.800" fill="none" stroke="#4a4c60" stroke-width=".95"/><path d="M4.600 5.800L9.800.6M6.600.5h3.300v3.300" fill="none" stroke="#4a4c60" stroke-width=".95"/></svg>
  <div class="ui" style="left:385.500px;top:333.600px;font-size:7.750px">Open PNG</div>
  <svg class="abs" style="left:439px;top:333.400px" width="12" height="10.600" viewBox="0 0 12 10.600"><path d="M0 1.800h6.700M9.700 1.800H12M0 5.300h2.300M5.300 5.300H12M0 8.800h6.700M9.700 8.800H12" stroke="#6c6e82" stroke-width=".9" fill="none"/><circle cx="8.200" cy="1.800" r="1.400" fill="none" stroke="#6c6e82" stroke-width=".9"/><circle cx="3.800" cy="5.300" r="1.400" fill="none" stroke="#6c6e82" stroke-width=".9"/><circle cx="8.200" cy="8.800" r="1.400" fill="none" stroke="#6c6e82" stroke-width=".9"/></svg>
  <div class="hl" style="top:346.800px"></div>
  <div class="abs" style="left:0;top:347.800px;width:100%;height:123.600px;background:#f8f8fb"></div>
  <div class="abs" style="left:21.600px;top:358.300px;width:334.300px;height:102.800px;border:1px solid #dfdfe6;border-radius:7px;background:#fff;overflow:hidden"><div class="row" style="top:-1.00px">\begin{aligned}&amp; S_{11}\left(\varphi, \varphi_1\right)=\frac{1}{2}\l…</div><div class="row" style="top:50.24px;border-top:1px solid #e4e4ea">$$ \begin{aligned}&amp; S_{11}\left(\varphi, \varphi_1\right)=\frac{1}{2…</div><div class="row" style="top:75.86px;border-top:1px solid #e4e4ea">\begin{equation} \begin{aligned}&amp; S_{11}\left(\varphi, \varphi_1\rig…</div></div>
  <div class="row" style="left:21.600px;width:334.300px;top:383.900px;height:25.700px;background:#2e6cf0;color:#fff;padding-left:13.900px">$\begin{aligned} &amp; S_{11}\left(\varphi, \varphi_1\right)…</div>
  <div class="abs" style="left:297.800px;top:387.600px;width:45.400px;height:17.800px;border-radius:9px;background:#fff;color:#2d62d8;font-size:6.700px;font-weight:bold;line-height:18px;text-align:center;letter-spacing:.35px">COPIED</div>
  <div class="btn" style="left:361.3px;top:358.4px"><svg class="abs" style="left:3.500px;top:2.600px" width="14.200" height="15.600" viewBox="0 0 14.600 16"><path d="M4 3H1.600c-.6 0-1 .4-1 1v10.400c0 .6.400 1 1 1h9.400c.6 0 1-.4 1-1V12M8.600 3H11c.6 0 1 .4 1 1v3.400" fill="none" stroke="#4b4e62" stroke-width="1"/><path d="M3.800 4.400V3.100l1.300-.5C5.300 1.500 5.700.8 6.300.8s1 .7 1.200 1.800l1.300.5v1.300z" fill="#fff" stroke="#4b4e62" stroke-width=".9" stroke-linejoin="round"/><path d="M2.900 7h6.400M2.900 8.800h4.500M2.900 10.600h4.500M2.900 12.400h6.400" stroke="#8a8ca0" stroke-width="1" fill="none"/><path d="M14.400 9.700H8.700" stroke="#4b4e62" stroke-width="1.500" fill="none"/><path d="M9.900 7.800L7.600 9.700l2.300 1.900z" fill="#4b4e62"/></svg></div>
  <div class="btn" style="left:389.3px;top:358.4px"><svg class="abs" style="left:4.400px;top:6.100px" width="11" height="10.800" viewBox="0 0 11.200 11"><path d="M4.600 1H.700v9.400h9.400V6.800" fill="none" stroke="#4b4e62" stroke-width="1.350"/><path d="M4.300 7.100l.5-2.100L9 .8l1.600 1.600-4.200 4.200z" fill="#4b4e62"/></svg></div>
  <div class="btn" style="left:416.1px;top:358.4px"><svg class="abs" style="left:4.100px;top:4.700px" width="13.400" height="13.800" viewBox="0 0 14 14.400"><circle cx="5.900" cy="5.900" r="4.900" fill="none" stroke="#4b4e62" stroke-width="1.250"/><path d="M9.400 9.600l4 4.200" stroke="#4b4e62" stroke-width="1.450" fill="none"/></svg></div>
  <div class="btn" style="left:361.3px;top:384.5px"><svg class="abs" style="left:3.500px;top:2.600px" width="14.200" height="15.600" viewBox="0 0 14.600 16"><path d="M4 3H1.600c-.6 0-1 .4-1 1v10.400c0 .6.400 1 1 1h9.400c.6 0 1-.4 1-1V12M8.600 3H11c.6 0 1 .4 1 1v3.400" fill="none" stroke="#4b4e62" stroke-width="1"/><path d="M3.800 4.400V3.100l1.300-.5C5.300 1.500 5.700.8 6.300.8s1 .7 1.200 1.800l1.300.5v1.300z" fill="#fff" stroke="#4b4e62" stroke-width=".9" stroke-linejoin="round"/><path d="M2.900 7h6.400M2.900 8.800h4.500M2.900 10.600h4.500M2.900 12.400h6.400" stroke="#8a8ca0" stroke-width="1" fill="none"/><path d="M14.400 9.700H8.700" stroke="#4b4e62" stroke-width="1.500" fill="none"/><path d="M9.900 7.800L7.600 9.700l2.300 1.900z" fill="#4b4e62"/></svg></div>
  <div class="btn" style="left:389.3px;top:384.5px"><svg class="abs" style="left:4.400px;top:6.100px" width="11" height="10.800" viewBox="0 0 11.200 11"><path d="M4.600 1H.700v9.400h9.400V6.800" fill="none" stroke="#4b4e62" stroke-width="1.350"/><path d="M4.300 7.100l.5-2.100L9 .8l1.600 1.600-4.200 4.200z" fill="#4b4e62"/></svg></div>
  <div class="btn" style="left:416.1px;top:384.5px"><svg class="abs" style="left:4.100px;top:4.700px" width="13.400" height="13.800" viewBox="0 0 14 14.400"><circle cx="5.900" cy="5.900" r="4.900" fill="none" stroke="#4b4e62" stroke-width="1.250"/><path d="M9.400 9.600l4 4.200" stroke="#4b4e62" stroke-width="1.450" fill="none"/></svg></div>
  <div class="btn" style="left:361.3px;top:410.6px"><svg class="abs" style="left:3.500px;top:2.600px" width="14.200" height="15.600" viewBox="0 0 14.600 16"><path d="M4 3H1.600c-.6 0-1 .4-1 1v10.400c0 .6.400 1 1 1h9.400c.6 0 1-.4 1-1V12M8.600 3H11c.6 0 1 .4 1 1v3.400" fill="none" stroke="#4b4e62" stroke-width="1"/><path d="M3.800 4.400V3.100l1.300-.5C5.300 1.500 5.700.8 6.300.8s1 .7 1.200 1.800l1.300.5v1.300z" fill="#fff" stroke="#4b4e62" stroke-width=".9" stroke-linejoin="round"/><path d="M2.900 7h6.400M2.900 8.800h4.500M2.900 10.600h4.500M2.900 12.400h6.400" stroke="#8a8ca0" stroke-width="1" fill="none"/><path d="M14.400 9.700H8.700" stroke="#4b4e62" stroke-width="1.500" fill="none"/><path d="M9.900 7.800L7.600 9.700l2.300 1.900z" fill="#4b4e62"/></svg></div>
  <div class="btn" style="left:389.3px;top:410.6px"><svg class="abs" style="left:4.400px;top:6.100px" width="11" height="10.800" viewBox="0 0 11.200 11"><path d="M4.600 1H.700v9.400h9.400V6.800" fill="none" stroke="#4b4e62" stroke-width="1.350"/><path d="M4.300 7.100l.5-2.100L9 .8l1.600 1.600-4.200 4.200z" fill="#4b4e62"/></svg></div>
  <div class="btn" style="left:416.1px;top:410.6px"><svg class="abs" style="left:4.100px;top:4.700px" width="13.400" height="13.800" viewBox="0 0 14 14.400"><circle cx="5.900" cy="5.900" r="4.900" fill="none" stroke="#4b4e62" stroke-width="1.250"/><path d="M9.400 9.600l4 4.200" stroke="#4b4e62" stroke-width="1.450" fill="none"/></svg></div>
  <div class="btn" style="left:361.3px;top:436.7px"><svg class="abs" style="left:3.500px;top:2.600px" width="14.200" height="15.600" viewBox="0 0 14.600 16"><path d="M4 3H1.600c-.6 0-1 .4-1 1v10.400c0 .6.400 1 1 1h9.400c.6 0 1-.4 1-1V12M8.600 3H11c.6 0 1 .4 1 1v3.400" fill="none" stroke="#4b4e62" stroke-width="1"/><path d="M3.800 4.400V3.100l1.300-.5C5.300 1.500 5.700.8 6.300.8s1 .7 1.200 1.800l1.300.5v1.300z" fill="#fff" stroke="#4b4e62" stroke-width=".9" stroke-linejoin="round"/><path d="M2.900 7h6.400M2.900 8.800h4.500M2.900 10.600h4.500M2.900 12.400h6.400" stroke="#8a8ca0" stroke-width="1" fill="none"/><path d="M14.400 9.700H8.700" stroke="#4b4e62" stroke-width="1.500" fill="none"/><path d="M9.900 7.800L7.600 9.700l2.300 1.900z" fill="#4b4e62"/></svg></div>
  <div class="btn" style="left:389.3px;top:436.7px"><svg class="abs" style="left:4.400px;top:6.100px" width="11" height="10.800" viewBox="0 0 11.200 11"><path d="M4.600 1H.700v9.400h9.400V6.800" fill="none" stroke="#4b4e62" stroke-width="1.350"/><path d="M4.300 7.100l.5-2.100L9 .8l1.600 1.600-4.200 4.200z" fill="#4b4e62"/></svg></div>
  <div class="btn" style="left:416.1px;top:436.7px"><svg class="abs" style="left:4.100px;top:4.700px" width="13.400" height="13.800" viewBox="0 0 14 14.400"><circle cx="5.900" cy="5.900" r="4.900" fill="none" stroke="#4b4e62" stroke-width="1.250"/><path d="M9.400 9.600l4 4.200" stroke="#4b4e62" stroke-width="1.450" fill="none"/></svg></div>
  <div class="hl" style="top:471.400px"></div>
  <div class="ui" style="left:13.900px;top:474.300px;font-size:7.400px;color:#66708f">Confidence</div>
  <div class="abs" style="left:13.900px;top:488.500px;width:437.200px;height:5.400px;border-radius:2.700px;background:#e7e7e9"></div>
  <div class="abs" style="left:13.900px;top:488.500px;width:370.500px;height:5.400px;border-radius:2.700px 0 0 2.700px;background:#3ec030"></div>
    <!--/PANEL-->
</div>
<!-- ARROW -->
<svg class="abs" style="left:0;top:0;pointer-events:none" width="1042" height="649" viewBox="0 0 1042 649"><path d="M375.4 372.3C375.8 370.0 376.6 363.8 377.9 358.6C379.2 353.4 381.1 347.1 383.3 341.3C385.5 335.6 387.8 329.9 390.9 324.1C394.0 318.4 397.8 312.2 401.7 306.8C405.6 301.4 409.9 296.5 414.6 291.8C419.3 287.1 424.3 282.8 429.7 278.8C435.1 274.8 440.8 271.1 446.9 268.0C453.0 264.9 459.8 262.4 466.3 260.5C472.8 258.6 479.3 257.5 485.8 256.6C492.3 255.7 498.7 255.3 505.2 255.1C511.7 254.9 518.8 255.1 524.6 255.5C530.4 255.9 534.7 256.8 540.0 257.8C545.3 258.8 549.2 259.7 556.3 261.6C563.4 263.6 575.2 267.3 582.5 269.5C589.8 271.7 596.9 273.9 599.8 274.8" fill="none" stroke="#1b8ceb" stroke-width="2.700" stroke-linecap="round"/><path d="M596.600 264.200L600.300 275L587.600 279.800" fill="none" stroke="#1b8ceb" stroke-width="2.700" stroke-linecap="round" stroke-linejoin="round"/></svg>
</body>
</html>
